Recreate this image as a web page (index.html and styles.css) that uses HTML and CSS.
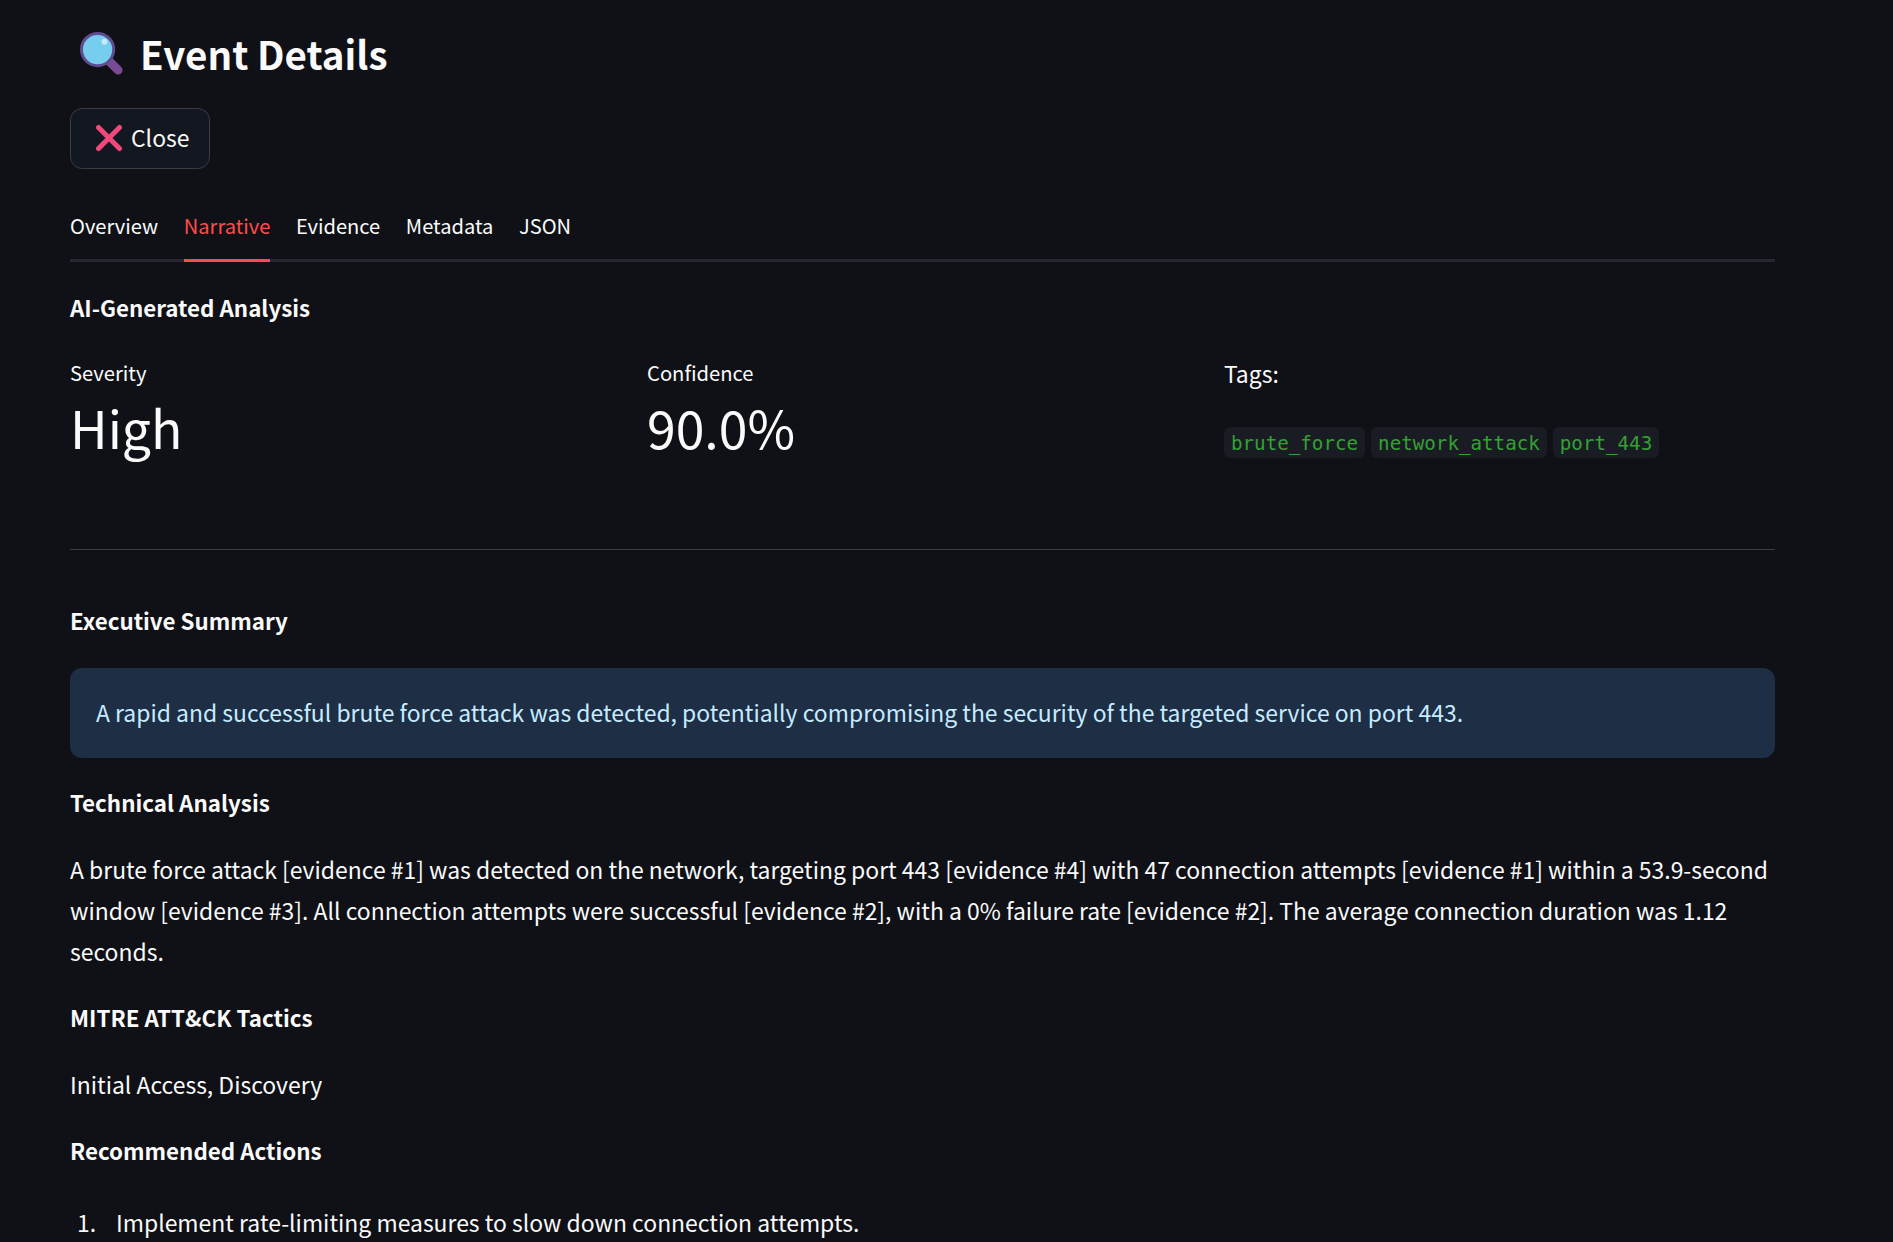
FILE: index.html
```html
<!DOCTYPE html>
<html lang="en">
<head>
<meta charset="utf-8">
<title>Event Details</title>
<link rel="stylesheet" href="styles.css">
</head>
<body>
<main class="page">
  <h1 class="title">
    <svg class="title-icon" viewBox="0 0 48 48" aria-hidden="true">
      <path d="M32 32l9 9" stroke="#7b4a94" stroke-width="9" stroke-linecap="round"/>
      <circle cx="20" cy="20" r="16.5" fill="#76cdee" stroke="#5f4b8f" stroke-width="3"/>
      <circle cx="27" cy="12" r="3" fill="#c5ecfa"/>
    </svg>
    <span>Event Details</span>
  </h1>
  <button class="close-btn">
    <svg class="close-icon" viewBox="0 0 28 28" aria-hidden="true"><path d="M3.5 3.5l21 21M24.5 3.5l-21 21" stroke="#f0487a" stroke-width="5" stroke-linecap="round"/></svg>
    <span>Close</span>
  </button>
  <nav class="tabs">
    <span class="tab">Overview</span>
    <span class="tab active">Narrative</span>
    <span class="tab">Evidence</span>
    <span class="tab">Metadata</span>
    <span class="tab">JSON</span>
  </nav>
  <p class="strong-line analysis">AI-Generated Analysis</p>
  <section class="cols">
    <div class="metric">
      <div class="metric-label">Severity</div>
      <div class="metric-value">High</div>
    </div>
    <div class="metric">
      <div class="metric-label">Confidence</div>
      <div class="metric-value">90.0%</div>
    </div>
    <div class="tags-col">
      <p class="tags-label">Tags:</p>
      <div class="tags">
        <code class="tag">brute_force</code>
        <code class="tag">network_attack</code>
        <code class="tag">port_443</code>
      </div>
    </div>
  </section>
  <hr class="rule">
  <p class="strong-line exec">Executive Summary</p>
  <div class="info">A rapid and successful brute force attack was detected, potentially compromising the security of the targeted service on port 443.</div>
  <p class="strong-line tech">Technical Analysis</p>
  <p class="para">A brute force attack [evidence #1] was detected on the network, targeting port 443 [evidence #4] with 47 connection attempts [evidence #1] within a 53.9-second window [evidence #3]. All connection attempts were successful [evidence #2], with a 0% failure rate [evidence #2]. The average connection duration was 1.12 seconds.</p>
  <p class="strong-line sub">MITRE ATT&amp;CK Tactics</p>
  <p class="para">Initial Access, Discovery</p>
  <p class="strong-line sub">Recommended Actions</p>
  <ol class="actions">
    <li class="action">Implement rate-limiting measures to slow down connection attempts.</li>
  </ol>
</main>
</body>
</html>
```

FILE: styles.css
```css
html, body {
  margin: 0;
  height: 1242px;
  overflow: hidden;
  background: #0f1117;
}
body {
  color: #fafafa;
  font-family: "Noto Sans CJK SC", "Noto Sans", sans-serif;
  font-size: 22.93px;
  line-height: 41px;
}
.page {
  width: 1705px;
  margin-left: 70px;
}
p { margin: 0; }
.title {
  display: flex;
  align-items: center;
  gap: 15px;
  height: 106px;
  margin: 0;
  font-size: 38.5px;
  font-weight: 700;
  line-height: 56px;
}
.title-icon { width: 47px; height: 47px; margin-left: 8px; }
.close-btn {
  display: flex;
  align-items: center;
  gap: 8px;
  width: 140px;
  height: 61px;
  margin-top: 2px;
  padding: 0 0 2px 24px;
  box-sizing: border-box;
  border: 1px solid #3a3c46;
  border-radius: 12px;
  background: #131720;
  color: #fafafa;
  font: inherit;
}
.close-icon { width: 28px; height: 28px; margin-top: 1px; }
.tabs {
  display: flex;
  gap: 25.6px;
  height: 93px;
  box-sizing: border-box;
  border-bottom: 3px solid #262730;
  align-items: flex-end;
}
.tab {
  height: 55px;
  margin-bottom: -3px;
  border-bottom: 3px solid transparent;
  font-size: 20.1px;
  line-height: 44px;
}
.tab.active { color: #ff4b4b; border-bottom-color: #ff4b4b; }
.strong-line { font-weight: 700; font-size: 22.35px; line-height: 41px; }
.analysis { margin-top: 25px; }
.cols {
  display: grid;
  grid-template-columns: repeat(3, 1fr);
  column-gap: 26px;
  margin-top: 25px;
  height: 196px;
}
.metric-label { font-size: 20.2px; line-height: 39px; }
.metric-value { font-size: 51.7px; line-height: 70px; }
.tags-label { line-height: 41px; }
.tags { display: flex; gap: 6px; margin-top: 33px; }
.tag {
  padding: 0 7px;
  height: 31px;
  border-radius: 6px;
  background: #1a1c24;
  color: #34a134;
  font-family: "DejaVu Sans Mono", monospace;
  font-size: 19.2px;
  line-height: 33px;
}
.rule { margin: 0; border: 0; border-top: 1px solid #3a3c44; }
.exec { margin-top: 50px; }
.info {
  margin-top: 27px;
  height: 90px;
  padding: 0 26px 2px;
  box-sizing: border-box;
  border-radius: 12px;
  background: #1d2e45;
  color: #c7ebff;
  line-height: 88px;
}
.tech { margin-top: 24px; }
.para { margin-top: 26px; }
.sub { margin-top: 25px; }
.actions { margin: 31px 0 0; padding: 0 0 0 7px; list-style: none; counter-reset: step; }
.action { display: flex; counter-increment: step; }
.action::before { content: counter(step) "."; width: 39px; flex: none; }
```
